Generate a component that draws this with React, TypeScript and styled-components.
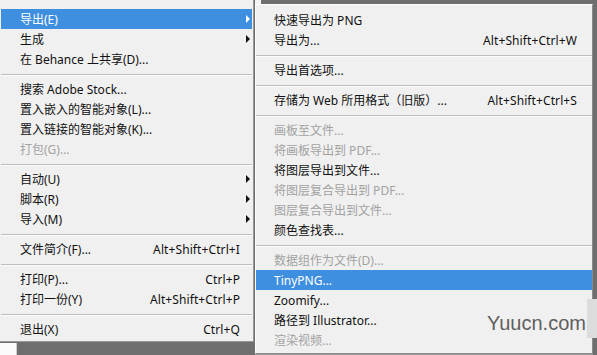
import React from 'react'
import styled, { createGlobalStyle } from 'styled-components'

const GlobalStyle = createGlobalStyle`
  html, body {
    margin: 0;
    padding: 0;
    width: 597px;
    height: 355px;
    overflow: hidden;
    background: #6e6e6e;
  }
  * { box-sizing: border-box; }
`

const Stage = styled.div`
  position: relative;
  width: 597px;
  height: 355px;
  display: flex;
  align-items: flex-start;
  background: #6e6e6e;
  font-family: "Noto Sans", "Noto Sans CJK SC", sans-serif;
  font-size: 12px;
`

const LeftColumn = styled.div`
  display: flex;
  flex-direction: column;
  width: 255px;
`

const Menu = styled.div<{ $width: number; $top: number }>`
  width: ${p => p.$width}px;
  margin-top: ${p => p.$top}px;
  background: #f0f0f0;
  border: 1px solid #979797;
  border-top-color: #fafafa;
  display: flex;
  flex-direction: column;
`

const LeftMenu = styled(Menu)`
  padding: 9px 1px 2px 1px;
  border-left: none;
  border-top: none;
`

const SubMenu = styled(Menu)`
  padding: 5px 0 3px 0;
  margin-left: -6px;
  border-left: 1px solid #fdfdfd;
  border-top: 1px solid #fdfdfd;
  border-right: 1px solid #8a8a8a;
  border-bottom: 1px solid #8a8a8a;
  box-shadow: 0 1px 0 #9a9a9a;
`

const Row = styled.div<{ $active?: boolean; $disabled?: boolean; $indent: number; $right: number }>`
  height: 20px;
  display: flex;
  align-items: center;
  justify-content: space-between;
  padding-left: ${p => p.$indent}px;
  padding-right: ${p => p.$right}px;
  position: relative;
  white-space: nowrap;
  color: ${p => (p.$active ? '#ffffff' : p.$disabled ? '#a2a2a2' : '#111111')};
  background: ${p => (p.$active ? '#3f8fe0' : 'transparent')};
`

const Shortcut = styled.span`
  letter-spacing: 0.1px;
`

const Arrow = styled.span<{ $active?: boolean }>`
  position: absolute;
  right: 2px;
  top: 6px;
  width: 0;
  height: 0;
  border-top: 4px solid transparent;
  border-bottom: 4px solid transparent;
  border-left: 4px solid ${p => (p.$active ? '#ffffff' : '#111111')};
`

const Separator = styled.div`
  height: 10px;
  display: flex;
  align-items: center;
  &::before {
    content: '';
    flex: 1;
    height: 1px;
    background: #bdbdbd;
    box-shadow: 0 1px 0 #fbfbfb;
  }
`

const BottomStrip = styled.div`
  height: 13px;
  display: flex;
`

const Thumb = styled.div`
  width: 17px;
  height: 13px;
  margin-top: 1px;
  background: #fafafa;
  border-right: 1px solid #cfcfcf;
`

const TopGap = styled.div`
  width: 6px;
  height: 4px;
  background: #f4f4f4;
`

const Watermark = styled.div`
  position: absolute;
  left: 487px;
  top: 312px;
  font-family: "Liberation Sans", Arial, sans-serif;
  font-size: 20px;
  color: #5f5f5f;
`

const WatermarkTab = styled.div`
  position: absolute;
  left: 587px;
  top: 299px;
  width: 10px;
  height: 39px;
  background: #dcdcdc;
`

type Item =
  | { sep: true }
  | { label: string; shortcut?: string; sub?: boolean; disabled?: boolean; active?: boolean }

const leftItems: Item[] = [
  { label: '导出(E)', sub: true, active: true },
  { label: '生成', sub: true },
  { label: '在 Behance 上共享(D)...' },
  { sep: true },
  { label: '搜索 Adobe Stock...' },
  { label: '置入嵌入的智能对象(L)...' },
  { label: '置入链接的智能对象(K)...' },
  { label: '打包(G)...', disabled: true },
  { sep: true },
  { label: '自动(U)', sub: true },
  { label: '脚本(R)', sub: true },
  { label: '导入(M)', sub: true },
  { sep: true },
  { label: '文件简介(F)...', shortcut: 'Alt+Shift+Ctrl+I' },
  { sep: true },
  { label: '打印(P)...', shortcut: 'Ctrl+P' },
  { label: '打印一份(Y)', shortcut: 'Alt+Shift+Ctrl+P' },
  { sep: true },
  { label: '退出(X)', shortcut: 'Ctrl+Q' },
]

const subItems: Item[] = [
  { label: '快速导出为 PNG' },
  { label: '导出为...', shortcut: 'Alt+Shift+Ctrl+W' },
  { sep: true },
  { label: '导出首选项...' },
  { sep: true },
  { label: '存储为 Web 所用格式（旧版）...', shortcut: 'Alt+Shift+Ctrl+S' },
  { sep: true },
  { label: '画板至文件...', disabled: true },
  { label: '将画板导出到 PDF...', disabled: true },
  { label: '将图层导出到文件...' },
  { label: '将图层复合导出到 PDF...', disabled: true },
  { label: '图层复合导出到文件...', disabled: true },
  { label: '颜色查找表...' },
  { sep: true },
  { label: '数据组作为文件(D)...', disabled: true },
  { label: 'TinyPNG...', active: true },
  { label: 'Zoomify...' },
  { label: '路径到 Illustrator...' },
  { label: '渲染视频...', disabled: true },
]

const renderItems = (items: Item[], indent: number, right: number) =>
  items.map((item, i) => {
    if ('sep' in item) return <Separator key={i} />
    return (
      <Row key={i} $active={item.active} $disabled={item.disabled} $indent={indent} $right={right}>
        <span>{item.label}</span>
        {item.shortcut && <Shortcut>{item.shortcut}</Shortcut>}
        {item.sub && <Arrow $active={item.active} />}
      </Row>
    )
  })

const App = () => {
  return (
    <Stage>
      <GlobalStyle />
      <LeftColumn>
        <LeftMenu $width={254} $top={0}>
          {renderItems(leftItems, 19, 12)}
        </LeftMenu>
        <BottomStrip>
          <Thumb />
        </BottomStrip>
      </LeftColumn>
      <div>
        <TopGap />
      </div>
      <SubMenu $width={338} $top={4}>
        {renderItems(subItems, 18, 15)}
      </SubMenu>
      <WatermarkTab />
      <Watermark>Yuucn.com</Watermark>
    </Stage>
  )
}

export default App
